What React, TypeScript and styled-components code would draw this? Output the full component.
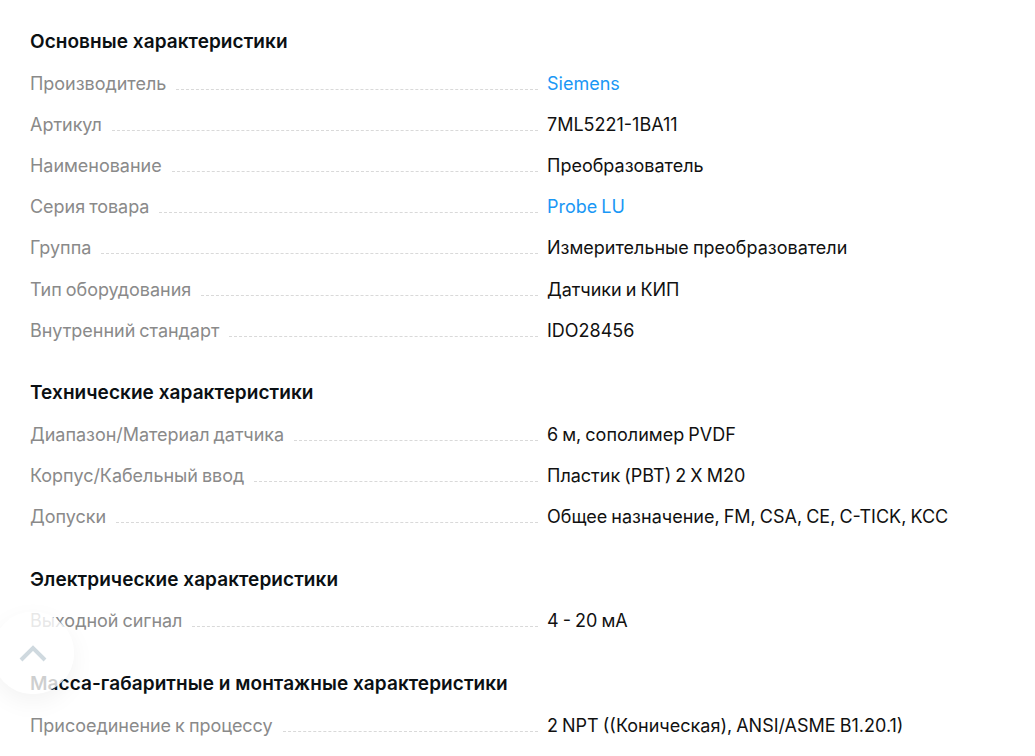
import React from 'react';
import styled, { createGlobalStyle } from 'styled-components';

type Row = {
  label: string;
  value: string;
  link?: boolean;
};

type Section = {
  title: string;
  rows: Row[];
};

const sections: Section[] = [
  {
    title: 'Основные характеристики',
    rows: [
      { label: 'Производитель', value: 'Siemens', link: true },
      { label: 'Артикул', value: '7ML5221-1BA11' },
      { label: 'Наименование', value: 'Преобразователь' },
      { label: 'Серия товара', value: 'Probe LU', link: true },
      { label: 'Группа', value: 'Измерительные преобразователи' },
      { label: 'Тип оборудования', value: 'Датчики и КИП' },
      { label: 'Внутренний стандарт', value: 'IDO28456' },
    ],
  },
  {
    title: 'Технические характеристики',
    rows: [
      { label: 'Диапазон/Материал датчика', value: '6 м, сополимер PVDF' },
      { label: 'Корпус/Кабельный ввод', value: 'Пластик (PBT) 2 X M20' },
      { label: 'Допуски', value: 'Общее назначение, FM, CSA, CE, C-TICK, KCC' },
    ],
  },
  {
    title: 'Электрические характеристики',
    rows: [{ label: 'Выходной сигнал', value: '4 - 20 мА' }],
  },
  {
    title: 'Масса-габаритные и монтажные характеристики',
    rows: [{ label: 'Присоединение к процессу', value: '2 NPT ((Коническая), ANSI/ASME B1.20.1)' }],
  },
];

const App: React.FC = () => {
  return (
    <Page>
      <GlobalStyle />
      {sections.map(section => (
        <Block key={section.title}>
          <Title>{section.title}</Title>
          {section.rows.map(row => (
            <Line key={row.label}>
              <Label>{row.label}</Label>
              <Dots />
              <Value $link={row.link}>{row.value}</Value>
            </Line>
          ))}
        </Block>
      ))}
      <UpButton aria-label="Наверх">
        <svg width="30" height="18" viewBox="0 0 30 18" fill="none">
          <path d="M3 16 L15 4 L27 16" stroke="#cfd9df" strokeWidth="4" />
        </svg>
      </UpButton>
    </Page>
  );
};

export default App;

const GlobalStyle = createGlobalStyle`
  html, body {
    margin: 0;
    height: 756px;
    overflow: hidden;
    background: #fff;
  }
`;

const Page = styled.div`
  padding: 30px 30px 0;
  font-family: 'Inter', 'Liberation Sans', sans-serif;
  font-size: 18px;
  word-spacing: -1px;
`;

const Block = styled.section`
  margin-bottom: 30.4px;
`;

const Title = styled.h3`
  margin: 0 0 9.6px;
  font-size: 19px;
  line-height: 23px;
  font-weight: 600;
  letter-spacing: 0.06px;
  word-spacing: 0;
  color: #0b1013;
`;

const Line = styled.div`
  display: flex;
  align-items: baseline;
  height: 41.2px;
  line-height: 41.2px;
`;

const Label = styled.span`
  color: #8a8a8a;
  letter-spacing: -0.03px;
  white-space: nowrap;
`;

const Dots = styled.span`
  flex: 1;
  margin: 0 9px 0 10px;
  border-bottom: 1px dashed #d9d9d9;
`;

const Value = styled.span<{ $link?: boolean }>`
  flex: 0 0 458px;
  color: ${p => (p.$link ? '#1a97f5' : '#111')};
  white-space: nowrap;
`;

const UpButton = styled.button`
  position: fixed;
  left: -8px;
  top: 612px;
  width: 82px;
  height: 82px;
  padding: 0;
  border: 0;
  border-radius: 50%;
  background: rgba(255, 255, 255, 0.8);
  box-shadow: 0 8px 24px rgba(0, 0, 0, 0.05);
  display: flex;
  align-items: center;
  justify-content: center;
`;
